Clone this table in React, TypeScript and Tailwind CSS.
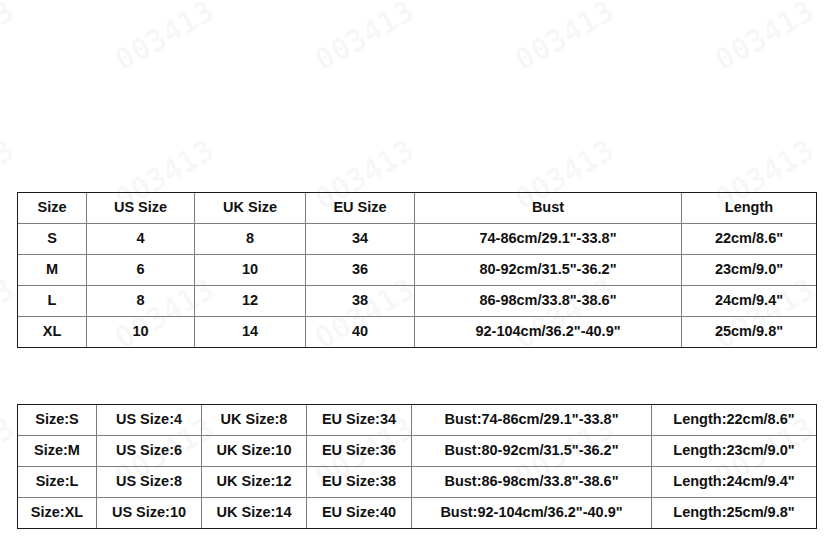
import React from "react";

const t1Head = ["Size", "US Size", "UK Size", "EU Size", "Bust", "Length"];
const t1Rows = [
  ["S", "4", "8", "34", "74-86cm/29.1\"-33.8\"", "22cm/8.6\""],
  ["M", "6", "10", "36", "80-92cm/31.5\"-36.2\"", "23cm/9.0\""],
  ["L", "8", "12", "38", "86-98cm/33.8\"-38.6\"", "24cm/9.4\""],
  ["XL", "10", "14", "40", "92-104cm/36.2\"-40.9\"", "25cm/9.8\""],
];
const t2Rows = [
  ["Size:S", "US Size:4", "UK Size:8", "EU Size:34", "Bust:74-86cm/29.1\"-33.8\"", "Length:22cm/8.6\""],
  ["Size:M", "US Size:6", "UK Size:10", "EU Size:36", "Bust:80-92cm/31.5\"-36.2\"", "Length:23cm/9.0\""],
  ["Size:L", "US Size:8", "UK Size:12", "EU Size:38", "Bust:86-98cm/33.8\"-38.6\"", "Length:24cm/9.4\""],
  ["Size:XL", "US Size:10", "UK Size:14", "EU Size:40", "Bust:92-104cm/36.2\"-40.9\"", "Length:25cm/9.8\""],
];

function Grid({ rows, cols }: { rows: string[][]; cols: string }) {
  return (
    <div className="w-[800px] border border-[#1c1c1c]">
      {rows.map((r, i) => (
        <div
          key={i}
          className={
            i < rows.length - 1
              ? "grid h-[31px] border-b border-[#7d7d7d] " + cols
              : "grid h-[30px] " + cols
          }
        >
          {r.map((c, j) => (
            <div
              key={j}
              className={
                j < r.length - 1
                  ? "flex items-center justify-center border-r border-[#7d7d7d] whitespace-nowrap"
                  : "flex items-center justify-center whitespace-nowrap"
              }
            >
              {c}
            </div>
          ))}
        </div>
      ))}
    </div>
  );
}

const wmY = [31, 170, 309, 448];
const wmX = [-34, 166, 366, 566, 766];

export default function App() {
  return (
    <div
      className="relative w-[835px] h-[541px] overflow-hidden bg-white text-[14.5px] font-bold text-[#111]"
      style={{ fontFamily: '"Liberation Sans", Arial, sans-serif' }}
    >
      <div className="absolute inset-0 pointer-events-none">
        {wmY.map((y) =>
          wmX.map((x) => (
            <div
              key={x + "-" + y}
              className="absolute text-[30px] font-bold text-black/[0.045] -rotate-30 whitespace-nowrap"
              style={{
                left: x - 56,
                top: y - 18,
                fontFamily: '"DejaVu Sans Mono", monospace',
              }}
            >
              003413
            </div>
          ))
        )}
      </div>
      <div className="relative pt-[192px] pl-[17px] flex flex-col gap-[56px]">
        <Grid
          rows={[t1Head, ...t1Rows]}
          cols="grid-cols-[69px_108px_111px_109px_267px_134px]"
        />
        <Grid
          rows={t2Rows}
          cols="grid-cols-[79px_105px_105px_105px_240px_164px]"
        />
      </div>
    </div>
  );
}
